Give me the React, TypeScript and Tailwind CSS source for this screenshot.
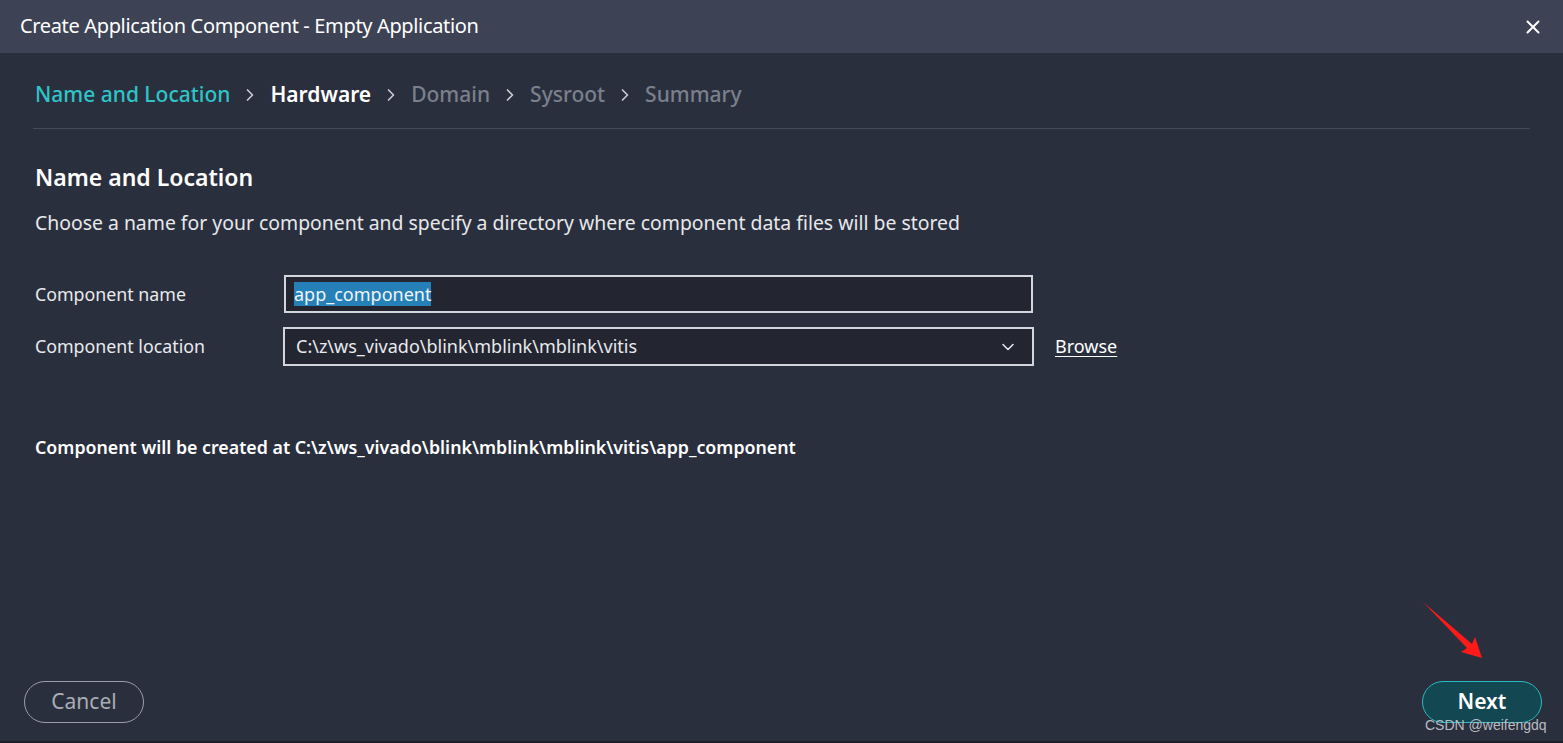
import { ChevronRight, ChevronDown, X } from 'lucide-react';

const steps = [
  { label: 'Name and Location', cls: 'text-[#2ec4c9] font-medium' },
  { label: 'Hardware', cls: 'text-white font-semibold' },
  { label: 'Domain', cls: 'text-[#7a808c] font-medium' },
  { label: 'Sysroot', cls: 'text-[#7a808c] font-medium' },
  { label: 'Summary', cls: 'text-[#7a808c] font-medium' },
];

export default function App() {
  return (
    <div
      className="w-[1563px] h-[743px] flex flex-col bg-[#2a2f3d] text-[#e8eaee] overflow-hidden relative"
      style={{ fontFamily: '"Noto Sans", "Open Sans", sans-serif' }}
    >
      {/* Title bar */}
      <div className="h-[53px] shrink-0 bg-[#3d4354] flex items-center justify-between pl-5 pr-[19px]">
        <span className="text-[20px] text-white tracking-[-0.35px] pb-[2px]">Create Application Component - Empty Application</span>
        <X className="w-[22px] h-[22px] text-white" strokeWidth={2.2} />
      </div>

      <div className="flex-1 flex flex-col px-[33px]">
        {/* Steps */}
        <div className="h-[76px] flex items-center gap-[10px] border-b border-[#444a58] pl-[2px] pt-[8px] text-[21px]">
          {steps.map((s, i) => (
            <div key={s.label} className="flex items-center gap-[10px]">
              {i > 0 && <ChevronRight className="w-[20px] h-[20px] text-[#c9ccd2]" strokeWidth={2} />}
              <span className={s.cls}>{s.label}</span>
            </div>
          ))}
        </div>

        <div className="pl-[2px]">
          <h2 className="mt-[31px] text-[23px] font-semibold text-white leading-[34px]">Name and Location</h2>
          <p className="mt-[15px] text-[19.4px] leading-[28px] text-[#e6e8ec]">
            Choose a name for your component and specify a directory where component data files will be stored
          </p>

          <div className="mt-[38px] flex flex-col gap-[14px] text-[17.8px]">
            <div className="flex items-center">
              <label className="w-[249px]">Component name</label>
              <div className="w-[749px] h-[38px] border-2 border-[#d3d6dc] bg-[#232631] flex items-center pl-[8px]">
                <span className="bg-[#2680b8] text-[#f0f4f8] text-[18px] leading-[24px]">app_component</span>
              </div>
            </div>
            <div className="flex items-center">
              <label className="w-[248px]">Component location</label>
              <div className="w-[751px] h-[39px] border-2 border-[#d3d6dc] bg-[#232631] flex items-center justify-between pl-[11px] pr-[14px]">
                <span className="text-[18px]">C:\z\ws_vivado\blink\mblink\mblink\vitis</span>
                <ChevronDown className="w-[20px] h-[20px] text-[#e8eaee]" strokeWidth={1.8} />
              </div>
              <a className="ml-[21px] text-[18px] underline underline-offset-[3px] text-white">Browse</a>
            </div>
          </div>

          <p className="mt-[68px] text-[17.8px] font-semibold text-white">
            Component will be created at C:\z\ws_vivado\blink\mblink\mblink\vitis\app_component
          </p>
        </div>
      </div>

      {/* Footer */}
      <div className="h-[100px] shrink-0 flex items-start justify-between px-[24px] pt-[38px]">
        <button className="w-[120px] h-[42px] rounded-full border border-[#9a9ea8] text-[21px] text-[#a9adb5]">
          Cancel
        </button>
        <button className="w-[120px] h-[42px] rounded-full border border-[#2cb8c0] bg-[#134853] text-[21px] font-semibold text-white mr-[-3px]">
          Next
        </button>
      </div>

      {/* annotation arrow */}
      <svg className="absolute left-[1420px] top-[598px]" width="70" height="65" viewBox="0 0 70 65">
        <path d="M3 4 L52 46 L55 39 L62 60 L41 54 L47 50 Z" fill="#ff1a1a" />
      </svg>
      <span
        className="absolute left-[1425px] top-[715px] text-[14px] text-[#b9bcc2]"
        style={{ fontFamily: 'Arial, "Liberation Sans", sans-serif' }}
      >
        CSDN @weifengdq
      </span>
      <div className="absolute left-0 right-0 bottom-0 h-[2px] bg-[#1c1f28]" />
    </div>
  );
}
